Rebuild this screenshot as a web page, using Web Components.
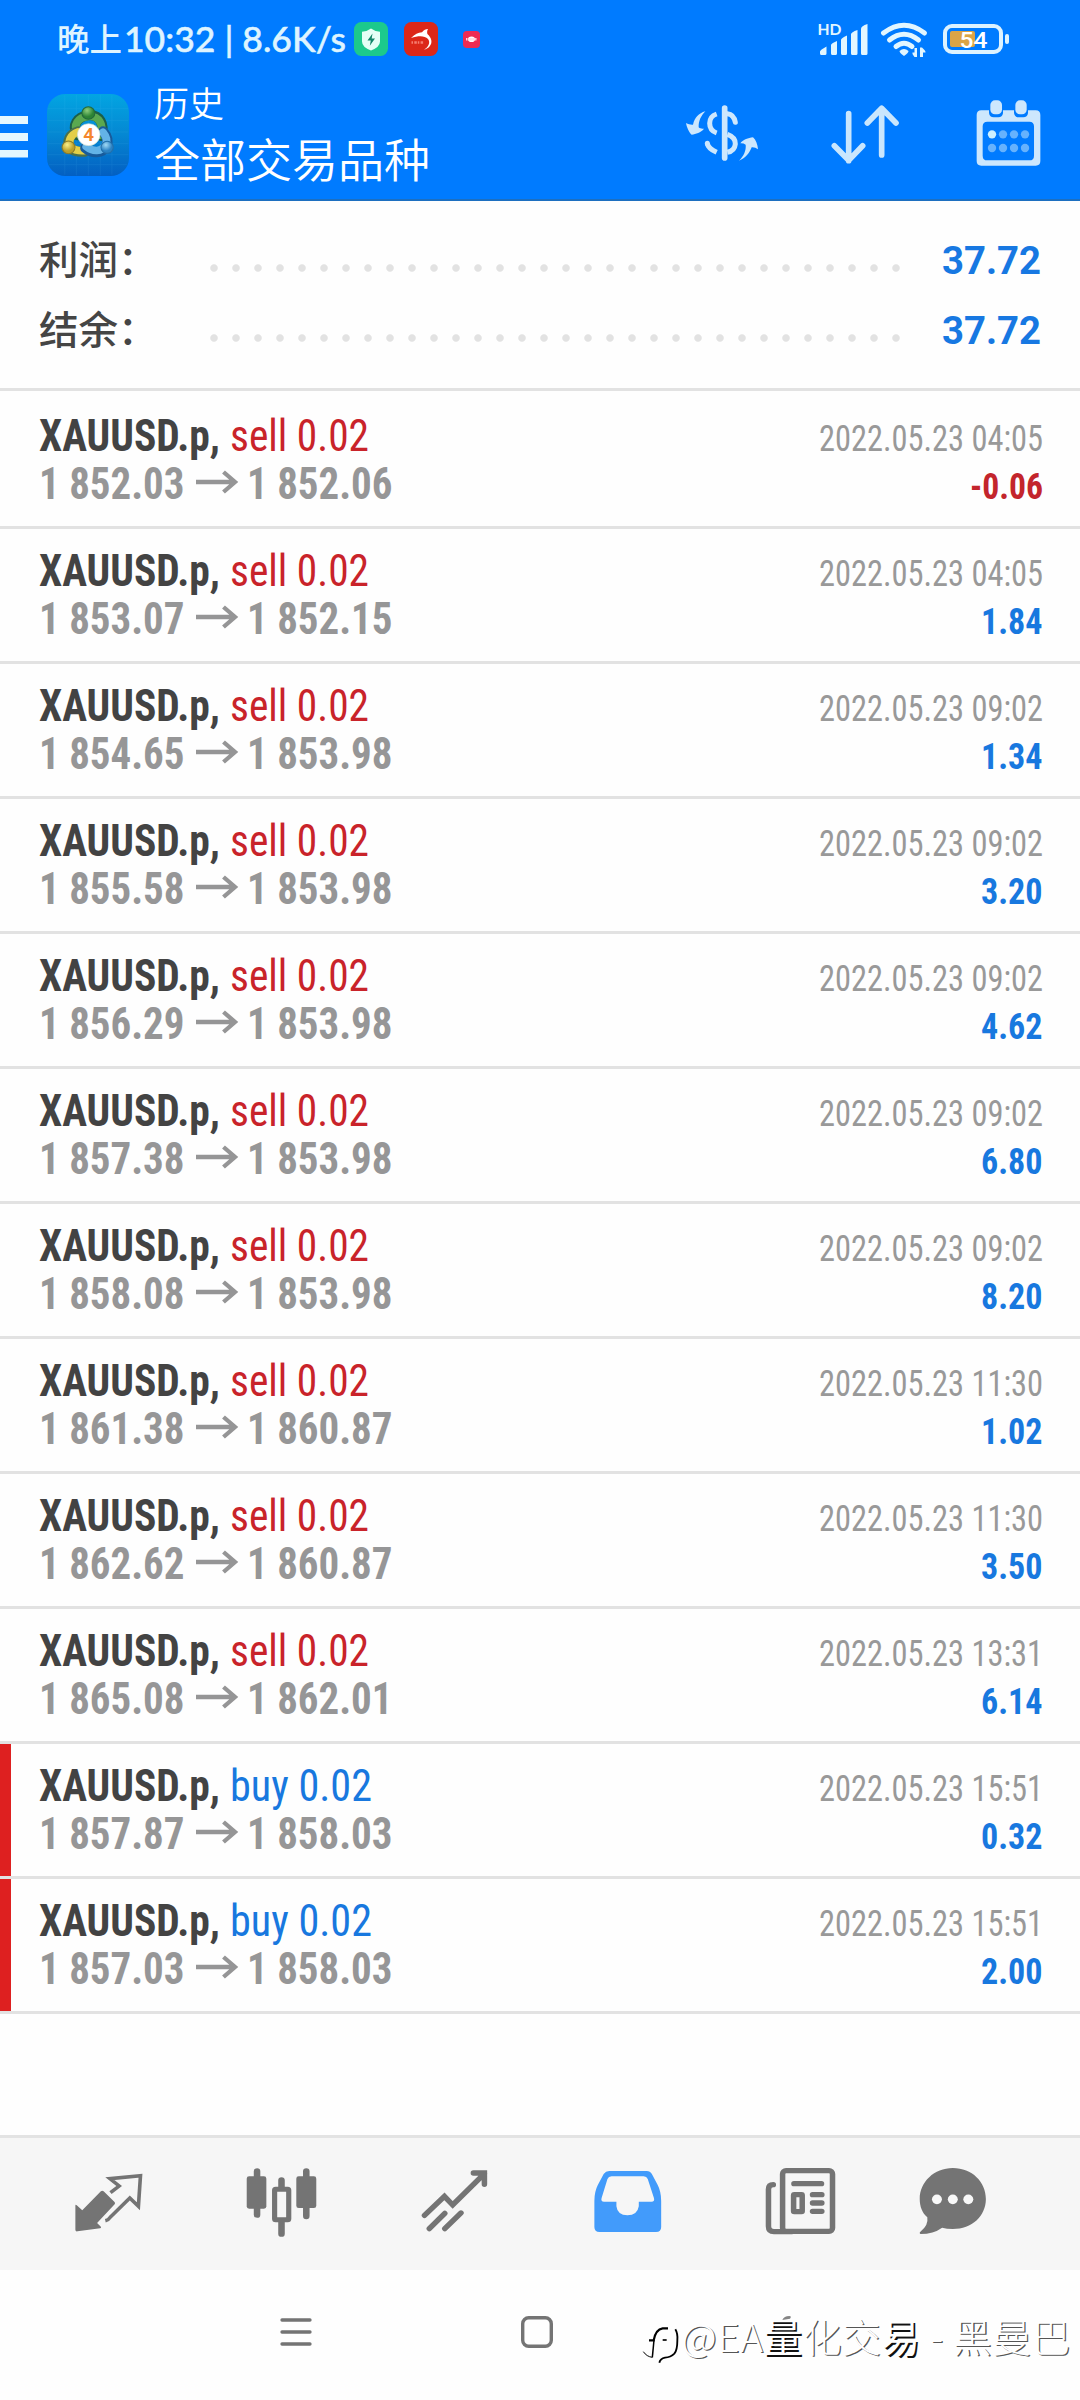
<!DOCTYPE html>
<html lang="zh">
<head>
<meta charset="utf-8">
<title>历史</title>
<style>
html,body{margin:0;background:#fefefe}
body{width:1080px;height:2400px;overflow:hidden;font-family:Roboto,"Noto Sans CJK SC",sans-serif}
</style>
</head>
<body>
<history-app></history-app>
<script>
const define=(name,html,init)=>customElements.define(name,class extends HTMLElement{
  constructor(){super();this.attachShadow({mode:'open'})}
  connectedCallback(){this.shadowRoot.innerHTML=typeof html==='function'?html(this):html;if(init)init(this)}
});

/* One line of text set to an exact advance width; the bottom of the box is the baseline. */
const FONTS={
  cond:"'Roboto Condensed',Roboto,sans-serif",
  rob:"Roboto,sans-serif",
  lato:"Lato,sans-serif",
  cjk:"'Noto Sans CJK SC',sans-serif"
};
define('fit-text',el=>{
  const g=n=>el.getAttribute(n);
  return `<style>:host{display:block;flex:none;width:${g('w')}px;height:${g('h')}px}svg{display:block;overflow:visible}
  text{font-family:${FONTS[g('font')||'cond']};font-size:${g('size')}px;font-weight:${g('weight')||400};fill:${g('color')||'#fff'};stroke:${g('color')||'#fff'};stroke-width:${g('bold')||0};white-space:pre}</style>
  <svg width="${g('w')}" height="${g('h')}"><text x="0" y="${g('h')}" textLength="${g('w')}" lengthAdjust="spacingAndGlyphs">${g('text')}</text></svg>`;
});

const icon=(box,w,h,body)=>`<style>:host{display:block;flex:none}svg{display:block;overflow:visible}</style><svg viewBox="${box}" width="${w}" height="${h}" preserveAspectRatio="none">${body}</svg>`;

define('icon-guard',icon('354 22 34 34',34,34,`<rect x="354" y="22" width="34" height="34" rx="7.5" fill="#1cc98c"/><path d="M371 28.500q4.500 3.300 9 3.300v9.700q0 5.500-9 9-9-3.500-9-9v-9.700q4.500 0 9-3.300z" fill="#e4fff6"/><path d="M372.500 33.500l-5 7h3.300l-1 5.200 5.200-7.300h-3.300z" fill="#12856a"/>`));
define('icon-dolphin',icon('404 22 34 34',34,34,`<rect x="404" y="22" width="34" height="34" rx="7.500" fill="#dc2718"/><path d="M411 38c4-3.800 7-5.500 11-5.800 2-2.500 4-3.300 6-3.200-1 1.700-1 3.500-.6 5 4.600 4 5.300 9 2.100 12.500-1.500 1.700-3.500 2.700-5.500 3.200 5-3.200 6.500-7.500 4-10.700-3.500-3.500-9.500-3.200-17-1z" fill="#fff"/><path d="M411.500 42.500h12" stroke="#ff9c8f" stroke-width="2.600" stroke-dasharray="1.500 1.300 2.500 1" opacity=".75"/>`));
define('icon-dot',icon('463 31 17 17',17,17,`<rect x="463" y="31" width="17" height="17" rx="4" fill="#ee2b52"/><ellipse cx="471.500" cy="39.300" rx="3.500" ry="2.800" fill="#fff"/><path d="M466 39.300h11" stroke="#ffd5dd" stroke-width="2.600" stroke-dasharray="1.500 .6"/>`));

define('icon-signal',icon('818 22 50 34',50,34,`
<text x="817.500" y="35" textLength="24" lengthAdjust="spacingAndGlyphs" font-family="Lato,sans-serif" font-weight="700" font-size="16" fill="#e2f6ff">HD</text>
<path d="M820 51.500q0-1.500 6.500-5v7q0 1.500-1.500 1.500h-3.500q-1.500 0-1.500-1.500zM831 45q0-1.500 6-4v12.500q0 1.500-1.500 1.500h-3q-1.500 0-1.500-1.500zM841 40q0-2 6-4.500v18q0 1.500-1.500 1.500h-3q-1.500 0-1.500-1.500zM851 34.500q0-2.500 6.500-4.500v23.500q0 1.500-1.500 1.500h-3.500q-1.500 0-1.500-1.500zM861 29q0-3 6.500-5v29.500q0 1.500-1.500 1.500h-3.500q-1.500 0-1.500-1.500z" fill="#e2f6ff"/>`));
define('icon-wifi',icon('880 22 48 36',48,36,`
<g fill="none" stroke="#e2f6ff" stroke-width="5" stroke-linecap="round"><path d="M883.500 33q20.500-15.500 41 0M889.500 40q14.500-11.500 29 0M896 46.500q8-6.500 16 0"/></g>
<path d="M899.500 51q4.500-4 9 0 0 2-4.500 5-4.500-3-4.500-5z" fill="#e2f6ff"/>
<path d="M917 48v9h-2.500q-2.500-3-2-4.500h2v-4.500zM920 57v-9.500h2q4 3.500 3.500 5h-2.500v4.500z" fill="#e2f6ff"/>`));
define('icon-battery',icon('943 22 67 34',67,34,`
<rect x="945" y="26" width="56" height="26" rx="7" fill="none" stroke="#dcf2ff" stroke-width="4"/>
<rect x="950" y="31" width="25" height="16" rx="2" fill="#dba446"/>
<rect x="1005" y="34" width="4" height="10" rx="2" fill="#dcf2ff"/>
<text x="959.500" y="47.500" textLength="28" lengthAdjust="spacingAndGlyphs" font-family="Roboto,sans-serif" font-weight="500" font-size="22" fill="#fff">54</text>`));

define('status-bar',`<style>:host{display:flex;height:80px;box-sizing:border-box;padding:0 70px 0 57px}
.i{margin-top:22px}.s{margin-top:31px}</style>
<fit-text font="cjk" weight="500" size="32" w="65" h="51" color="#def4ff" text="晚上"></fit-text>
<fit-text font="lato" weight="500" size="35.500" bold=".5" w="222" h="52" color="#def4ff" text="10:32 | 8.6K/s" style="margin-left:2px"></fit-text>
<icon-guard class="i" style="margin-left:8px"></icon-guard>
<icon-dolphin class="i" style="margin-left:16px"></icon-dolphin>
<icon-dot class="s" style="margin-left:25px"></icon-dot>
<icon-signal class="i" style="margin-left:auto"></icon-signal>
<icon-wifi class="i" style="margin-left:12px"></icon-wifi>
<icon-battery class="i" style="margin-left:15px"></icon-battery>`);

define('icon-menu',icon('0 0 28 42',28,42,`<path d="M0 0h28v8H0zM0 17h28v8H0zM0 34h28v7.500H0z" fill="#e4f7ff"/>`));
define('app-logo',icon('24 26 240 246',82,82,`
<defs><linearGradient id="bg" x1="0" y1="0" x2="0" y2="1"><stop offset="0" stop-color="#02a5e2"/><stop offset=".5" stop-color="#0587d2"/><stop offset="1" stop-color="#035fc2"/></linearGradient>
<radialGradient id="g" cx=".4" cy=".3"><stop offset="0" stop-color="#8fce7c"/><stop offset="1" stop-color="#2c8335"/></radialGradient>
<radialGradient id="y" cx=".4" cy=".3"><stop offset="0" stop-color="#fbf08a"/><stop offset="1" stop-color="#bba02b"/></radialGradient>
<radialGradient id="b" cx=".4" cy=".3"><stop offset="0" stop-color="#a2daf5"/><stop offset="1" stop-color="#2a82c4"/></radialGradient></defs>
<rect x="24" y="26" width="240" height="246" rx="54" fill="url(#bg)"/>
<path d="M76 30v238M110 28v242M145 28v242M180 28v242M214 30v238M26 70h236M26 105h236M26 140h236M26 175h236M26 208h236M30 238h228" stroke="#6fd2ff" stroke-width="2" opacity=".12"/>
<g stroke-linecap="round" fill="none">
<path d="M112 150C96 120 112 94 145 90s49 26 38 62" stroke="#1c5f48" stroke-width="30"/>
<path d="M113 146C100 118 114 96 145 93s46 26 36 56" stroke="#5aa850" stroke-width="23"/>
<path d="M116 138C90 146 80 168 92 188q12 13 42 11" stroke="#4b704b" stroke-width="30"/>
<path d="M114 140C92 148 84 168 94 186q12 11 38 10" stroke="#e3cf48" stroke-width="23"/>
<path d="M188 138q19 21 10 44c-12 24-42 24-62 6" stroke="#185b9b" stroke-width="30"/>
<path d="M188 141q16 20 8 38c-12 21-38 21-57 5" stroke="#63b3e7" stroke-width="23"/></g>
<circle cx="145" cy="83" r="19" fill="url(#g)" stroke="#23693c" stroke-width="3"/>
<circle cx="87" cy="186" r="19" fill="url(#y)" stroke="#8b7b2b" stroke-width="3"/>
<circle cx="200" cy="186" r="18" fill="url(#b)" stroke="#236fa9" stroke-width="3"/>
<circle cx="146" cy="148" r="33" fill="#fff" stroke="#c7dcd4" stroke-width="2"/>
<text x="146" y="168" text-anchor="middle" font-family="Roboto,sans-serif" font-weight="600" font-size="55" fill="#f5862d">4</text>`));

define('icon-currency',icon('45 55 225 180',75,60,`
<g fill="none" stroke="#cde7fd" stroke-width="15"><path d="M164 70v150" stroke-linecap="round" stroke-width="17"/>
<path d="M140 88q-21 7-21 28 0 22 21 29"/><path d="M112 176q2 15 28 27" stroke-linecap="butt" stroke-width="15"/><path d="M112 176v1" stroke-linecap="round"/>
<path d="M172 87q20 2 24 26" stroke-linecap="round"/><path d="M172 149q25 9 24 29-2 21-24 25"/></g>
<path d="M106 80C86 86 74 98 69 120c-7 1-14-2-21-5 2 12 9 28 17 35 13-2 27-6 37-18-6 1-12 0-16-4-1-18 7-35 20-48z" fill="#cde7fd"/>
<path d="M207 228c20-8 32-23 38-40 7-1 13 2 19 6-1-14-6-28-15-36-15 2-28 6-38 18q9-1 16 4c2 17-6 34-20 48z" fill="#cde7fd"/>`));
define('icon-sort',icon('480 55 210 185',70,61.7,`<g fill="none" stroke="#c9e6fd" stroke-width="17" stroke-linecap="round" stroke-linejoin="round"><path d="M536 87v141M493 183l43 44 42-44M635 211V72M592 115l43-44 43 44"/></g>`));
define('icon-calendar',icon('915 40 200 210',66.7,70,`
<path fill-rule="evenodd" d="M934 77h163q14 0 14 14v138q0 14-14 14H934q-14 0-14-14V91q0-14 14-14zM952 111q-14 0-14 14v88q0 14 14 14h126q14 0 14-14v-88q0-14-14-14z" fill="#cde7fd"/>
<path d="M957 72h42v13q-2 13-14 13h-14q-12 0-14-13zM1032 72h42v13q-2 13-14 13h-14q-12 0-14-13z" fill="#007bff"/>
<rect x="961" y="47" width="35" height="42" rx="14" fill="#cde7fd"/><rect x="1036" y="47" width="34" height="42" rx="14" fill="#cde7fd"/>
<g fill="#66b2fd"><circle cx="999" cy="149" r="12.500"/><circle cx="1032" cy="149" r="12.500"/><circle cx="1065" cy="149" r="12.500"/><circle cx="966" cy="190" r="12.500"/><circle cx="999" cy="190" r="12.500"/><circle cx="1032" cy="190" r="12.500"/><circle cx="1065" cy="190" r="12.500"/></g><circle cx="966" cy="149" r="12.500" fill="#cdf0ff"/>`));

define('tool-bar',`<style>:host{display:flex;height:119px;box-sizing:border-box;padding-right:38.300px}</style>
<icon-menu style="margin-top:36px"></icon-menu>
<app-logo style="margin:14px 0 0 19px"></app-logo>
<div style="margin-left:25px">
<fit-text font="cjk" weight="350" size="35" w="70" h="37" text="历史"></fit-text>
<fit-text font="cjk" weight="350" size="46" w="276" h="60" text="全部交易品种"></fit-text></div>
<icon-currency style="margin:23.300px 0 0 auto"></icon-currency>
<icon-sort style="margin:23.300px 0 0 70px"></icon-sort>
<icon-calendar style="margin:18.300px 0 0 75px"></icon-calendar>`);

define('summary-row',el=>`<style>:host{display:flex;align-items:flex-end;padding:0 39px 0 39px}
.dots{width:704px;height:8px;margin:0 0 2px 45px;background:radial-gradient(circle at 11px 4px,#e2e2e2 3.3px,transparent 4.2px) 0 0/22px 8px}
.v{margin-left:auto}</style>
<fit-text font="cjk" weight="500" size="39" w="118.500" h="${el.getAttribute('h')}" color="#454545" text="${el.getAttribute('label')}"></fit-text><div class="dots"></div>
<fit-text class="v" font="rob" weight="700" size="39.500" w="99" h="39" color="#1778e2" text="${el.getAttribute('value')}"></fit-text>`);

define('price-arrow',icon('0 0 42 24',42,24,`<path d="M0 12h39M27.500 2L39 12 27.500 22" fill="none" stroke="#959596" stroke-width="4.300"/>`));

define('deal-row',el=>{
  const [side,from,to,date,profit]=el.getAttribute('deal').split('|');
  const buy=side==='buy',neg=profit[0]==='-';
  return `<style>:host{display:flex;justify-content:space-between;box-sizing:border-box;height:135px;border-bottom:3px solid #e2e2e2;padding:0 37.500px 0 38.500px;background:${buy?'linear-gradient(90deg,#de2020 11px,#fefefe 11px)':'#fefefe'};background-clip:padding-box}
  :host([first]){height:138px;padding-top:3px}
  .l{display:flex;align-items:flex-end}.r{display:flex;flex-direction:column;align-items:flex-end}</style>
  <div><div class="l"><fit-text weight="700" size="44" w="181" h="56.500" color="#434343" text="XAUUSD.p,"></fit-text>
  <fit-text size="44" w="${buy?142:139}" h="56.500" color="${buy?'#1878df':'#c9232a'}" text="${side} 0.02" style="margin-left:10.500px"></fit-text></div>
  <div class="l"><fit-text weight="700" size="44" w="145.500" h="48" color="#969697" text="${from}"></fit-text>
  <price-arrow style="margin:0 9px 4.500px 12px"></price-arrow>
  <fit-text weight="700" size="44" w="145.500" h="48" color="#969697" text="${to}"></fit-text></div></div>
  <div class="r"><fit-text size="36.500" w="224" h="56.500" color="#999" text="${date}"></fit-text>
  <fit-text weight="700" size="36.500" w="${neg?73:61.5}" h="47.500" color="${neg?'#c3252c':'#1878df'}" text="${profit}"></fit-text></div>`;
});

const C='#747474';
define('tab-trade',icon('215 155 200 182',68.9,60.7,`
<path d="M219 256q0-5 4-1l16 15 54-57q4-4 8 0l31 31q4 4 1 8l-51 56 11 11q2 3-2 5l-66 9q-6 1-6-5z" fill="${C}"/>
<path d="M321 217l25-20-27-22 89-9-6 92-25-25-57 58q-5 8-14 10" fill="none" stroke="${C}" stroke-width="10.500"/>`));
define('tab-chart',icon('710 140 212 212',73,70.7,`
<g stroke="${C}" stroke-width="19" stroke-linecap="round"><path d="M745 153v130M888 153v134M816 180v30M816 300v40"/></g>
<g fill="${C}"><rect x="715" y="168" width="57" height="97" rx="7"/><rect x="859" y="168" width="58" height="95" rx="7"/></g>
<rect x="796" y="207" width="41" height="91" rx="3" fill="#f6f6f6" stroke="${C}" stroke-width="15"/>`));
define('tab-trend',icon('1218 148 200 190',68.9,63.3,`
<g fill="none" stroke="${C}" stroke-width="16" stroke-linecap="round"><path d="M1231 287l58-57 24 26 92-94M1373 160h32v34M1245 327l45-46M1290 327l47-47"/></g>`));
define('tab-history',icon('153 148 203 190',69.9,63.3,`
<path fill-rule="evenodd" d="M200 151h109q10 0 15 9l17 33q10 20 10 48v78q0 15-15 15H172q-15 0-15-15v-78q0-28 10-48l17-33q6-9 16-9zM207 167q-9 0-12 8l-17 57q-3 11 7 11h36v14q3 27 32 27t33-27v-14h37q10 0 7-11l-18-57q-3-8-12-8z" fill="#429bfb"/>`));
define('tab-news',icon('652 140 210 206',72.300,68.700,`
<g fill="none" stroke="${C}" stroke-width="16"><rect x="706" y="151" width="145" height="182" rx="10"/><path d="M679 193q-14 0-14 14v111q0 16 16 16h50" stroke-linecap="round"/><rect x="738" y="223" width="25" height="51" rx="2"/></g>
<g stroke="${C}" stroke-width="16" stroke-linecap="round"><path d="M739 190h80M793 223h27M793 248h27M793 273h27"/></g>`));
define('tab-chat',icon('1098 140 202 206',69.600,68.700,`
<path d="M1199 143c56 0 96 42 96 93s-40 90-96 90q-18 0-31-4-25 19-63 19-5-3 0-7 24-19 20-43c-15-13-22-33-22-55 0-51 42-93 96-93z" fill="${C}"/>
<g fill="#f8f8f8"><circle cx="1153" cy="237" r="14.500"/><circle cx="1199" cy="237" r="14.500"/><circle cx="1244" cy="237" r="14.500"/></g>`));

define('tab-bar',`<style>:host{display:grid;grid-template-columns:repeat(5,173px) 132px;box-sizing:border-box;height:135px;padding:30px 0 0 22px;border-top:3px solid #e3e3e3;background:#f6f6f6;justify-items:center;align-items:start}</style>
<tab-trade style="margin-top:4px"></tab-trade><tab-chart style="margin-top:-1px"></tab-chart><tab-trend style="margin-top:1px"></tab-trend><tab-history style="margin-top:1.500px"></tab-history><tab-news style="margin-top:-1px"></tab-news><tab-chat style="margin-top:-1px"></tab-chat>`);

define('nav-recent',icon('0 0 30 30',30,30,`<path d="M1 3h28M1 15h28M1 27h28" stroke="${C}" stroke-width="3.300" stroke-linecap="round"/>`));
define('nav-home',icon('0 0 32 32',32,32,`<rect x="1.700" y="1.700" width="28.600" height="28.600" rx="6" fill="none" stroke="${C}" stroke-width="3.400"/>`));
define('author-logo',icon('0 75 120 120',40,40,`<path d="M427 60q5-12 21-12 8 1 2 8z" fill="#858585"/><g fill="none" stroke="#000"><path d="M27 121h14q6-33 27-36h16" stroke-width="6.500"/><path d="M42 120l-5 52" stroke-width="4.500"/><path d="M10 155q10 15 27 17" stroke-width="3"/><path d="M68 120h12" stroke-width="5"/><path d="M106 88q8 13 6 34 0 28-9 39-11 11-28 12-14 3-17 15" stroke-width="5.500"/></g>`));
define('author-mark',`<style>:host{display:flex;align-items:flex-start}
span{font:300 38.500px/56px "Noto Sans CJK SC",sans-serif;letter-spacing:.8px;color:#fff;white-space:pre;text-shadow:1.3px 1.3px 0 #555;margin-left:1.500px}
b{font-weight:400;text-shadow:1.7px 1.7px 0 #111}</style>
<author-logo style="margin-top:18px"></author-logo><span>@EA<b>量</b>化交<b>易</b> - 黑曼巴</span>`);
define('nav-bar',`<style>:host{display:flex;height:130px;background:#fefefe;box-sizing:border-box;padding-left:281px}</style>
<nav-recent style="margin-top:47px"></nav-recent><nav-home style="margin:46px 0 0 210px"></nav-home><author-mark style="margin:36.500px 0 0 87px"></author-mark>`);

const DEALS=[
'sell|1 852.03|1 852.06|2022.05.23 04:05|-0.06','sell|1 853.07|1 852.15|2022.05.23 04:05|1.84',
'sell|1 854.65|1 853.98|2022.05.23 09:02|1.34','sell|1 855.58|1 853.98|2022.05.23 09:02|3.20',
'sell|1 856.29|1 853.98|2022.05.23 09:02|4.62','sell|1 857.38|1 853.98|2022.05.23 09:02|6.80',
'sell|1 858.08|1 853.98|2022.05.23 09:02|8.20','sell|1 861.38|1 860.87|2022.05.23 11:30|1.02',
'sell|1 862.62|1 860.87|2022.05.23 11:30|3.50','sell|1 865.08|1 862.01|2022.05.23 13:31|6.14',
'buy|1 857.87|1 858.03|2022.05.23 15:51|0.32','buy|1 857.03|1 858.03|2022.05.23 15:51|2.00'];
define('history-app',`<style>:host{display:flex;flex-direction:column;width:1080px;height:2400px;background:#fefefe}
header{background:#007bff;border-bottom:2px solid #1d6fc0}
section{height:187px;border-bottom:3px solid #e2e2e2}
main{flex:1}</style>
<header><status-bar></status-bar><tool-bar></tool-bar></header>
<section><summary-row h="73" label="利润：" value="37.72"></summary-row><summary-row h="70" label="结余：" value="37.72"></summary-row></section>
<main>${DEALS.map((d,i)=>`<deal-row deal="${d}"${i?'':' first'}></deal-row>`).join('')}</main>
<tab-bar></tab-bar><nav-bar></nav-bar>`);
</script>
</body>
</html>
